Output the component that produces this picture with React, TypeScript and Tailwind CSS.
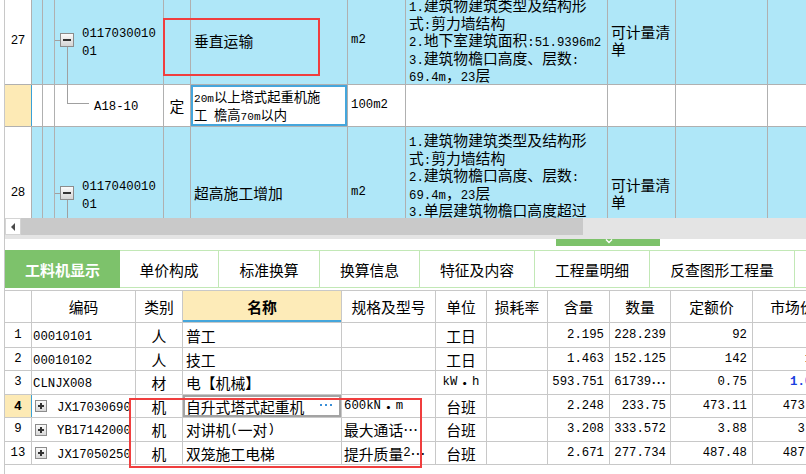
import React from "react";

const A = "font-['Liberation_Mono',monospace] text-[12.3px]";
const AS = "font-['Liberation_Mono',monospace] text-[11.1px]";

function Tx({ s, small = false }: { s: string; small?: boolean }) {
  const parts = s.match(/[\x00-\x7f]+|[^\x00-\x7f]+/g) || [];
  return (
    <>
      {parts.map((p, i) =>
        p.charCodeAt(0) < 128 ? (
          <span key={i} className={small ? AS : A}>
            {p}
          </span>
        ) : (
          <span key={i}>{p}</span>
        )
      )}
    </>
  );
}

function MinusBox() {
  return (
    <div className="w-[14px] h-[14px] border border-[#8c8c8c] bg-linear-to-b from-[#fbfbfb] to-[#d4d4d4] flex items-center justify-center">
      <div className="w-[8px] h-[2px] bg-[#333]" />
    </div>
  );
}

function PlusBox() {
  return (
    <div className="w-[12px] h-[12px] shrink-0 border border-[#8c8c8c] bg-linear-to-b from-[#fbfbfb] to-[#d8d8d8] relative">
      <div className="absolute left-[2px] top-[4px] w-[6px] h-[2px] bg-[#333]" />
      <div className="absolute left-[4px] top-[2px] w-[2px] h-[6px] bg-[#333]" />
    </div>
  );
}

const TL = "shrink-0 border-r border-[#b0b0b0]";

function Desc({ lines, pt }: { lines: string[]; pt: string }) {
  return (
    <div className={`${TL} w-[202px] pl-[3px] whitespace-nowrap overflow-hidden ${pt}`}>
      {lines.map((l, i) => (
        <div key={i} className="h-[17.5px] leading-[17.5px]">
          <Tx s={l} />
        </div>
      ))}
    </div>
  );
}

function TreeCell({ code }: { code: string }) {
  return (
    <div className={`${TL} w-[109px] relative flex items-center`}>
      <div className="absolute left-0 top-1/2 w-[5px] h-px bg-[#a0a0a0]" />
      <div className="absolute left-[12px] top-[calc(50%+7px)] -bottom-px w-px bg-[#a0a0a0]" />
      <div className="ml-[5px] relative">
        <MinusBox />
      </div>
      <div className="ml-[8px]">
        <div className="h-[18px] leading-[18px]">
          <Tx s={code} />
        </div>
        <div className="h-[18px] leading-[18px]">
          <Tx s="01" />
        </div>
      </div>
    </div>
  );
}

const BW = [
  "w-[27px]",
  "w-[104px]",
  "w-[47px]",
  "w-[159px]",
  "w-[94px]",
  "w-[51px]",
  "w-[61px]",
  "w-[62px]",
  "w-[61px]",
  "w-[82px]",
  "w-[80px]",
];
const BL = "shrink-0 border-r border-[#c8c8c8] overflow-hidden whitespace-nowrap flex items-center";

type Row = {
  n: string;
  code: string;
  plus?: boolean;
  t: string;
  name: string;
  spec: string;
  unit: string;
  qty: string;
  amt: string;
  price: string;
  mp: string;
  h: string;
  sel?: boolean;
  mpBlue?: boolean;
};

const rows: Row[] = [
  { n: "1", code: "00010101", t: "人", name: "普工", spec: "", unit: "工日", qty: "2.195", amt: "228.239", price: "92", mp: "92", h: "h-[25px]" },
  { n: "2", code: "00010102", t: "人", name: "技工", spec: "", unit: "工日", qty: "1.463", amt: "152.125", price: "142", mp: "142", h: "h-[23px]" },
  { n: "3", code: "CLNJX008", t: "材", name: "电【机械】", spec: "", unit: "kW·h", qty: "593.751", amt: "61739…", price: "0.75", mp: "1.058", h: "h-[24px]", mpBlue: true },
  { n: "4", code: "JX17030690", plus: true, t: "机", name: "自升式塔式起重机", spec: "600kN·m", unit: "台班", qty: "2.248", amt: "233.75", price: "473.11", mp: "473.11", h: "h-[23px]", sel: true },
  { n: "9", code: "YB17142000", plus: true, t: "机", name: "对讲机(一对)", spec: "最大通话…", unit: "台班", qty: "3.208", amt: "333.572", price: "3.88", mp: "3.88", h: "h-[24px]" },
  { n: "13", code: "JX17050250", plus: true, t: "机", name: "双笼施工电梯", spec: "提升质量2…", unit: "台班", qty: "2.671", amt: "277.734", price: "487.48", mp: "487.48", h: "h-[23px]" },
];

const tabs = [
  { label: "单价构成", w: "w-[99px]" },
  { label: "标准换算", w: "w-[101px]" },
  { label: "换算信息", w: "w-[100px]" },
  { label: "特征及内容", w: "w-[115px]" },
  { label: "工程量明细", w: "w-[115px]" },
  { label: "反查图形工程量", w: "w-[145px]" },
];

export default function App() {
  return (
    <div className="w-[806px] h-[474px] overflow-hidden bg-white relative font-['Noto_Sans_CJK_SC',sans-serif] text-[14.8px] leading-[17px] text-black">
      <div className="ml-[4px] h-full border-l border-[#c8c8c8] flex flex-col">
        {/* top grid */}
        <div className="h-[218px] overflow-hidden shrink-0">
          {/* row 27 */}
          <div className="flex h-[89px] -mt-[4px] border-b border-[#b0b0b0] bg-[#afe7f8]">
            <div className={`${TL} w-[27px] bg-white flex items-center justify-center font-['Liberation_Sans',sans-serif] text-[12.5px]`}>27</div>
            <div className={`${TL} w-[11px]`} />
            <div className={`${TL} w-[12px]`} />
            <TreeCell code="0117030010" />
            <div className={`${TL} w-[27px]`} />
            <div className={`${TL} w-[157px] flex items-center pl-[3px]`}>垂直运输</div>
            <div className={`${TL} w-[58px] flex items-center pl-[3px]`}>
              <Tx s="m2" />
            </div>
            <Desc pt="pt-0" lines={["1.建筑物建筑类型及结构形", "式:剪力墙结构", "2.地下室建筑面积:51.9396m2", "3.建筑物檐口高度、层数:", "69.4m，23层"]} />
            <div className={`${TL} w-[68px] flex flex-col justify-center pl-[3px] leading-[17px]`}>
              <div>可计量清</div>
              <div>单</div>
            </div>
            <div className={`${TL} w-[92px]`} />
            <div className={`${TL} w-[60px]`} />
          </div>
          {/* row A18-10 */}
          <div className="flex h-[42px] border-b border-[#b0b0b0] bg-white">
            <div className="shrink-0 w-[27px] bg-[#fdeab5] border-r border-[#3aa0d8]" />
            <div className={`${TL} w-[11px]`} />
            <div className={`${TL} w-[12px]`} />
            <div className={`${TL} w-[109px] relative flex items-center`}>
              <div className="absolute left-[12px] top-0 h-[18px] w-px bg-[#a0a0a0]" />
              <div className="absolute left-[12px] top-[18px] w-[22px] h-px bg-[#a0a0a0]" />
              <div className="ml-[39px]">
                <Tx s="A18-10" />
              </div>
            </div>
            <div className={`${TL} w-[27px] flex items-center justify-center`}>定</div>
            <div className={`${TL} w-[157px] flex flex-col justify-center pl-[3px] shadow-[inset_0_0_0_2px_#45a6dc] text-[13.3px] whitespace-nowrap overflow-hidden`}>
              <div className="h-[18px] leading-[18px]">
                <Tx small s="20m以上塔式起重机施" />
              </div>
              <div className="h-[18px] leading-[18px] whitespace-pre">
                <Tx small s="工 檐高70m以内" />
              </div>
            </div>
            <div className={`${TL} w-[58px] flex items-center pl-[3px]`}>
              <Tx s="100m2" />
            </div>
            <div className={`${TL} w-[202px]`} />
            <div className={`${TL} w-[68px]`} />
            <div className={`${TL} w-[92px]`} />
            <div className={`${TL} w-[60px]`} />
          </div>
          {/* row 28 */}
          <div className="flex h-[132px] border-b border-[#b0b0b0] bg-[#afe7f8]">
            <div className={`${TL} w-[27px] bg-white flex items-center justify-center font-['Liberation_Sans',sans-serif] text-[12.5px]`}>28</div>
            <div className={`${TL} w-[11px]`} />
            <div className={`${TL} w-[12px]`} />
            <TreeCell code="0117040010" />
            <div className={`${TL} w-[27px]`} />
            <div className={`${TL} w-[157px] flex items-center pl-[3px]`}>超高施工增加</div>
            <div className={`${TL} w-[58px] flex items-center pl-[3px]`}>
              <Tx s="m2" />
            </div>
            <Desc
              pt="pt-[4px]"
              lines={[
                "1.建筑物建筑类型及结构形",
                "式:剪力墙结构",
                "2.建筑物檐口高度、层数:",
                "69.4m，23层",
                "3.单层建筑物檐口高度超过",
                "20m，多层建筑物超过6层",
                "的项目",
              ]}
            />
            <div className={`${TL} w-[68px] flex flex-col justify-center pl-[3px] leading-[17px]`}>
              <div>可计量清</div>
              <div>单</div>
            </div>
            <div className={`${TL} w-[92px]`} />
            <div className={`${TL} w-[60px]`} />
          </div>
        </div>

        {/* horizontal scrollbar */}
        <div className="flex h-[17px] shrink-0">
          <div className="w-[16px] shrink-0 bg-white border border-[#d4d4d4] flex items-center justify-center">
            <div className="w-0 h-0 border-y-[4px] border-y-transparent border-r-[4px] border-r-[#4a4a4a]" />
          </div>
          <div className="w-[562px] shrink-0 bg-[#c9c9c9]" />
          <div className="flex-1 bg-[#e4e4e4]" />
        </div>
        <div className="h-[4px] shrink-0 bg-[#e4e4e4]" />
        <div className="h-[11px] shrink-0 bg-white">
          <div className="ml-[551px] w-[104px] h-[7px] bg-[#7dc26b] flex justify-center">
            <svg width="10" height="5" viewBox="0 0 10 5" className="ml-[2px]">
              <polyline points="2,0.5 5,3.5 8,0.5" fill="none" stroke="#ffffff" strokeWidth="1.4" />
            </svg>
          </div>
        </div>

        {/* tabs */}
        <div className="flex h-[38px] shrink-0">
          <div className="w-[115px] shrink-0 bg-[#7dc26b] text-white font-bold text-[15px] flex items-center justify-center">工料机显示</div>
          {tabs.map((t) => (
            <div key={t.label} className={`${t.w} shrink-0 border-y border-r border-[#c2e8b6] flex items-center justify-center`}>
              {t.label}
            </div>
          ))}
          <div className="flex-1 border-y border-[#c2e8b6]" />
        </div>
        <div className="h-[2px] shrink-0" />

        {/* bottom table header */}
        <div className="flex h-[33px] shrink-0 border-y border-[#c8c8c8]">
          {["", "编码", "类别", "名称", "规格及型号", "单位", "损耗率", "含量", "数量", "定额价", "市场价"].map((h, i) => (
            <div
              key={i}
              className={`${BL} ${BW[i]} justify-center ${i === 3 ? "bg-[#fdebb8] font-bold shadow-[inset_0_-2px_0_#45a6dc]" : ""}`}
            >
              {h}
            </div>
          ))}
        </div>
        {rows.map((r) => (
          <div key={r.n} className={`flex ${r.h} shrink-0 border-b border-[#c8c8c8]`}>
            <div className={`${BL} ${BW[0]} justify-center ${r.sel ? "bg-[#fdeab5] border-r-[#3aa0d8]" : ""}`}>
              <span className={r.sel ? "font-['Liberation_Mono',monospace] text-[13px] font-bold" : A}>{r.n}</span>
            </div>
            <div className={`${BL} ${BW[1]} ${r.plus ? "pl-[3px]" : "pl-[1px]"}`}>
              {r.plus && <PlusBox />}
              <span className={r.plus ? "ml-[10px]" : ""}>
                <Tx s={r.code} />
              </span>
            </div>
            <div className={`${BL} ${BW[2]} justify-center`}>{r.t}</div>
            <div className={`${BL} ${BW[3]} pl-[3px] relative ${r.sel ? "shadow-[inset_0_0_0_2px_#a3a3a3]" : ""}`}>
              <Tx s={r.name} />
              {r.sel && (
                <span className="absolute right-[9px] top-[calc(50%-2px)] flex gap-[3px]">
                  <span className="w-[2px] h-[2px] bg-[#3a8fd8]" />
                  <span className="w-[2px] h-[2px] bg-[#3a8fd8]" />
                  <span className="w-[2px] h-[2px] bg-[#3a8fd8]" />
                </span>
              )}
            </div>
            <div className={`${BL} ${BW[4]} pl-[2px]`}>
              <Tx s={r.spec} />
            </div>
            <div className={`${BL} ${BW[5]} justify-center`}>
              <Tx s={r.unit} />
            </div>
            <div className={`${BL} ${BW[6]}`} />
            <div className={`${BL} ${BW[7]} justify-end pr-[5px]`}>
              <Tx s={r.qty} />
            </div>
            <div className={`${BL} ${BW[8]} justify-end pr-[4px]`}>
              <Tx s={r.amt} />
            </div>
            <div className={`${BL} ${BW[9]} justify-end pr-[5px]`}>
              <Tx s={r.price} />
            </div>
            <div className={`${BL} ${BW[10]} justify-end pr-[5px] ${r.mpBlue ? "text-[#1a3fe0] font-bold" : ""}`}>
              <Tx s={r.mp} />
            </div>
          </div>
        ))}
      </div>

      {/* red annotation boxes */}
      <div className="absolute left-[163px] top-[18px] w-[157px] h-[58px] border-2 border-[#f03e3e]" />
      <div className="absolute left-[129px] top-[398px] w-[293px] h-[70px] border-2 border-[#f03e3e]" />
    </div>
  );
}
